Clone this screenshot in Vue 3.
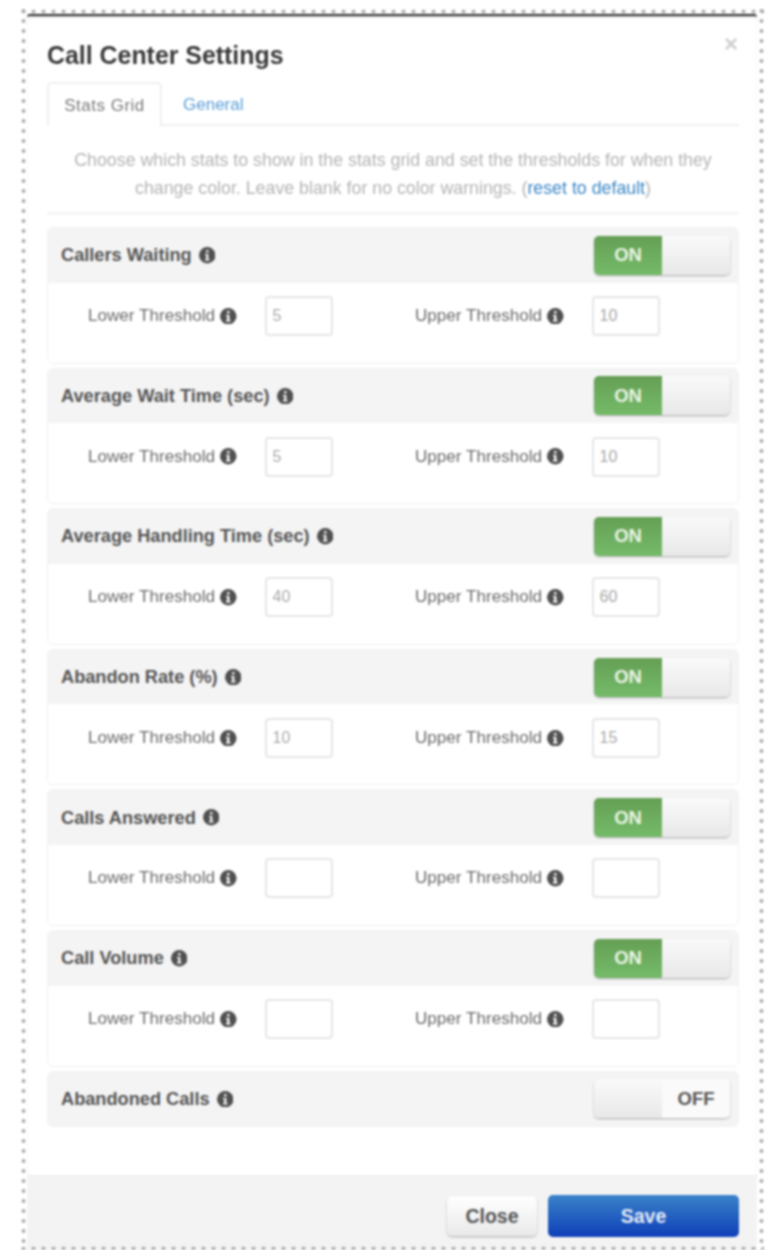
<script setup>
const stats = [
  { name: 'Callers Waiting', lower: '5', upper: '10', on: true },
  { name: 'Average Wait Time (sec)', lower: '5', upper: '10', on: true },
  { name: 'Average Handling Time (sec)', lower: '40', upper: '60', on: true },
  { name: 'Abandon Rate (%)', lower: '10', upper: '15', on: true },
  { name: 'Calls Answered', lower: '', upper: '', on: true },
  { name: 'Call Volume', lower: '', upper: '', on: true },
  { name: 'Abandoned Calls', on: false }
]
</script>

<template>
  <div class="page">
    <div class="modal">
      <div class="body">
        <span class="close-x">×</span>
        <h3 class="title">Call Center Settings</h3>
        <div class="tabs">
          <span class="tab active">Stats Grid</span>
          <span class="tab link general">General</span>
        </div>
        <p class="intro">
          Choose which stats to show in the stats grid and set the thresholds for when they change color. Leave blank for no color warnings. (<span class="link">reset to default</span>)
        </p>
        <div class="list">
          <section v-for="s in stats" :key="s.name" class="stat">
            <header class="stat-head">
              <span class="stat-name">{{ s.name }}</span>
              <svg class="info" viewBox="0 0 16 16"><circle cx="8" cy="8" r="8" /><rect x="6.9" y="3" width="2.3" height="2.3" fill="#f4f4f4" /><path d="M5.8 6.7h3.3v5h1.1v1.3H5.8v-1.3h1.1V8H5.8z" fill="#f4f4f4" /></svg>
              <div v-if="s.on" class="switch">
                <span class="sw-on">ON</span>
                <span class="sw-knob"></span>
              </div>
              <div v-else class="switch off">
                <span class="sw-knob"></span>
                <span class="sw-off">OFF</span>
              </div>
            </header>
            <div v-if="s.on" class="stat-body">
              <div class="field">
                <span class="field-label">Lower Threshold</span>
                <svg class="info" viewBox="0 0 16 16"><circle cx="8" cy="8" r="8" /><rect x="6.9" y="3" width="2.3" height="2.3" fill="#fff" /><path d="M5.8 6.7h3.3v5h1.1v1.3H5.8v-1.3h1.1V8H5.8z" fill="#fff" /></svg>
                <span class="input">{{ s.lower }}</span>
              </div>
              <div class="field">
                <span class="field-label">Upper Threshold</span>
                <svg class="info" viewBox="0 0 16 16"><circle cx="8" cy="8" r="8" /><rect x="6.9" y="3" width="2.3" height="2.3" fill="#fff" /><path d="M5.8 6.7h3.3v5h1.1v1.3H5.8v-1.3h1.1V8H5.8z" fill="#fff" /></svg>
                <span class="input">{{ s.upper }}</span>
              </div>
            </div>
          </section>
        </div>
      </div>
      <footer class="footer">
        <button class="btn close">Close</button>
        <button class="btn save">Save</button>
      </footer>
    </div>
    <div class="dots"></div>
  </div>
</template>

<style>
html, body { margin: 0; background: #fff; }
</style>

<style scoped>
.page {
  position: relative;
  width: 768px;
  height: 1250px;
  padding: 14px 0 0 27px;
  box-sizing: border-box;
  overflow: hidden;
  font-family: "Liberation Sans", Arial, sans-serif;
  filter: blur(0.8px);
}
.dots {
  position: absolute;
  left: 21px;
  top: 8.5px;
  width: 743px;
  height: 1242px;
  pointer-events: none;
  background:
    radial-gradient(circle at center, #aaa 1.6px, transparent 2.2px) -2.5px 0 / 10px 5px repeat-x,
    radial-gradient(circle at center, #aaa 1.6px, transparent 2.2px) -2.5px 100% / 10px 5px repeat-x,
    radial-gradient(circle at center, #aaa 1.6px, transparent 2.2px) 0 7px / 5px 10px repeat-y,
    radial-gradient(circle at center, #aaa 1.6px, transparent 2.2px) 100% 7px / 5px 10px repeat-y;
}
.modal {
  width: 730px;
  height: 1236px;
  display: flex;
  flex-direction: column;
  border-top: 2px solid #2c2c2c;
  border-radius: 3px 3px 0 0;
  box-sizing: border-box;
  background: #fff;
  box-shadow: inset 0 2px 2px rgba(0,0,0,.1);
}
.body {
  position: relative;
  flex: 1;
  padding: 24px 18px 0 20px;
}
.close-x {
  position: absolute;
  top: 16px;
  right: 19px;
  font-size: 24px;
  line-height: 24px;
  font-weight: 700;
  color: #cfcfcf;
}
.title {
  margin: 0;
  font-size: 24.9px;
  line-height: 30px;
  font-weight: 700;
  color: #3a3a3a;
}
.tabs {
  display: flex;
  margin-top: 12px;
  height: 44px;
  border-bottom: 2px solid #efefef;
  box-sizing: border-box;
}
.tab {
  display: flex;
  align-items: center;
  justify-content: center;
  font-size: 17px;
  height: 44px;
  padding-top: 2px;
  box-sizing: border-box;
}
.tab.active {
  width: 115px;
  letter-spacing: 0.5px;
  color: #7a7a7a;
  background: #fff;
  border: 2px solid #efefef;
  border-bottom: 0;
  border-radius: 5px 5px 0 0;
}
.tab.general { padding: 2px 21px 0; color: #5a9ed8; }
.link { color: #3c87c6; }
.intro {
  margin: 0;
  padding: 20px 0 0;
  height: 89px;
  box-sizing: border-box;
  border-bottom: 3px solid #f6f6f6;
  text-align: center;
  font-size: 17.8px;
  line-height: 28px;
  color: #b4b4b4;
}
.list {
  display: flex;
  flex-direction: column;
  gap: 4px;
  margin-top: 12px;
}
.stat {
  border: 1px solid #f1f1f1;
  border-radius: 6px;
  overflow: hidden;
  background: #fff;
}
.stat-head {
  height: 54.6px;
  display: flex;
  align-items: center;
  padding: 0 8px 0 13px;
  background: #f4f4f4;
}
.stat-name {
  font-size: 18.2px;
  font-weight: 700;
  color: #555;
  margin-right: 7px;
  padding-top: 1px;
}
.info {
  width: 16.5px;
  height: 16.5px;
  fill: #505050;
  flex: none;
}
.switch {
  margin-left: auto;
  width: 136px;
  height: 39px;
  display: flex;
  border-radius: 5px;
  overflow: hidden;
  box-shadow: 0 1px 2px rgba(0,0,0,.3);
}
.sw-on {
  width: 68px;
  display: flex;
  align-items: center;
  justify-content: center;
  font-size: 18.5px;
  font-weight: 700;
  color: #eaf4e4;
  background: linear-gradient(#659f55, #75bb69);
}
.sw-knob {
  flex: 1;
  background: linear-gradient(#fafafa, #e8e8e8);
}
.sw-off {
  width: 68px;
  display: flex;
  align-items: center;
  justify-content: center;
  font-size: 18.5px;
  font-weight: 700;
  color: #555;
  background: #fafafa;
}
.stat-body {
  height: 80px;
  display: flex;
  align-items: center;
}
.field {
  width: 327px;
  display: flex;
  align-items: center;
  padding-left: 40px;
  box-sizing: border-box;
  margin-top: -13px;
}
.field-label {
  font-size: 17.1px;
  color: #6a6a6a;
  margin-right: 5px;
}
.input {
  margin-left: 28px;
  width: 68px;
  height: 40px;
  box-sizing: border-box;
  border: 2px solid #e6e6e6;
  border-radius: 4px;
  padding-left: 6px;
  display: flex;
  align-items: center;
  font-size: 16px;
  color: #a8a8a8;
  background: #fff;
}
.footer {
  flex: none;
  height: 75px;
  display: flex;
  justify-content: flex-end;
  align-items: flex-start;
  gap: 11px;
  padding: 19px 18px 0 0;
  box-sizing: border-box;
  background: #f3f3f3;
  border-top: 1px solid #eee;
}
.btn {
  border: 0;
  border-radius: 5px;
  font-family: inherit;
  font-size: 19.5px;
  font-weight: 700;
  padding: 0;
}
.btn.close {
  width: 90px;
  height: 40px;
  margin-top: 1px;
  color: #555;
  background: linear-gradient(#fff, #e9e9e9);
  box-shadow: 0 1px 2px rgba(0,0,0,.3);
}
.btn.save {
  width: 191px;
  height: 42px;
  color: #e4ecf8;
  background: linear-gradient(#3a82c9, #0e3fb8);
}
</style>
